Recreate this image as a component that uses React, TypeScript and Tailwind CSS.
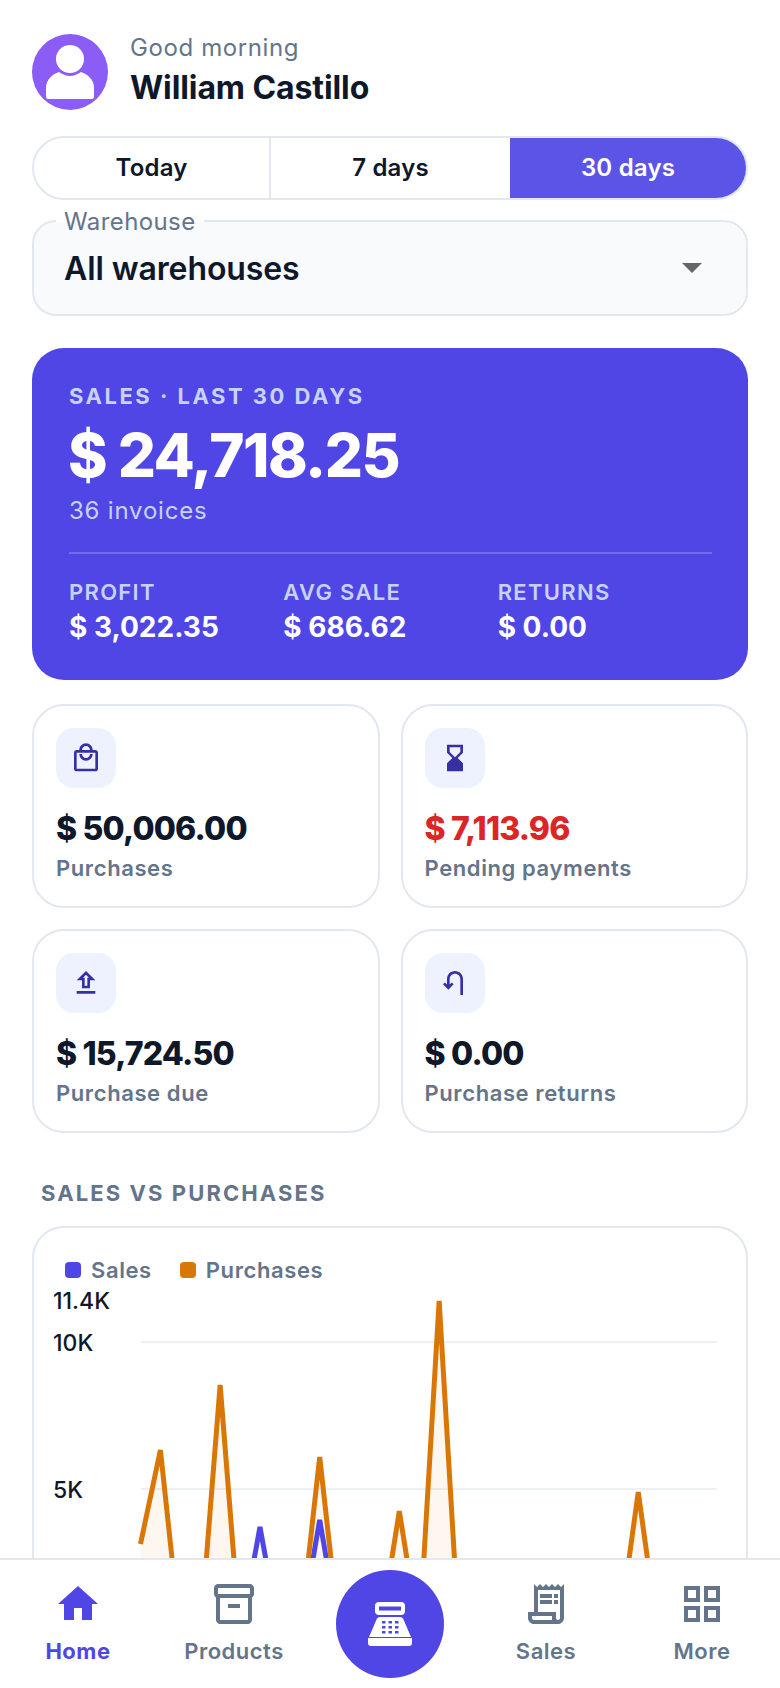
import React from 'react';
import {
  MdHome,
  MdHourglassBottom,
  MdOutlineGridView,
  MdOutlineInventory2,
  MdOutlineLocalMall,
  MdOutlineReceiptLong,
  MdOutlineUpload,
  MdOutlineUTurnLeft,
} from 'react-icons/md';

const purchases = [3130, 6330, 0, 0, 8540, 0, 0, 0, 0, 6090, 0, 0, 0, 4250, 0, 11400, 0, 0, 0, 0, 0, 0, 0, 0, 0, 4900, 0, 0, 0];
const sales = [0, 0, 0, 0, 0, 0, 3710, 0, 0, 3950, 0, 0, 0, 0, 0, 0, 0, 0, 0, 0, 0, 0, 0, 0, 0, 0, 0, 0, 0];

const px = (i: number) => 139.5 + i * 19.91;
const py = (v: number) => 1637 - v * 0.02939;
const linePath = (data: number[]) => data.map((v, i) => `${i === 0 ? 'M' : 'L'}${px(i)} ${py(v)}`).join(' ');

const Avatar = () => (
  <svg width="76" height="76" viewBox="0 0 76 76" className="shrink-0">
    <circle cx="38" cy="38" r="38" fill="#8b5cf6" />
    <circle cx="38" cy="25" r="14" fill="#fff" />
    <path d="M14 63V54c0-9 7-14 13-16 3 2 7 4 11 4s8-2 11-4c6 2 13 7 13 16v9c0 1-1 2-2 2H16c-1 0-2-1-2-2z" fill="#fff" />
  </svg>
);

const RegisterIcon = () => (
  <svg width="44" height="44" viewBox="0 0 44 44">
    <rect x="7" y="0" width="30" height="13" rx="4" fill="#fff" />
    <rect x="11" y="4.500" width="22" height="4" fill="#4f46e5" />
    <path d="M12 15h20c2 0 3 1 3.500 2.500L43 35H1l7.500-17.500C9 16 10 15 12 15z" fill="#fff" />
    <path d="M0 36h44v5c0 2-1 3-3 3H3c-2 0-3-1-3-3z" fill="#fff" />
    {[14, 20.500, 27].map((x) =>
      [19, 24, 29].map((y) => <rect key={`${x}-${y}`} x={x} y={y} width="3.500" height="2.500" fill="#4f46e5" />),
    )}
  </svg>
);

const StatCard = ({ icon, value, label, red }: { icon: React.ReactNode; value: string; label: string; red?: boolean }) => (
  <div className="h-[204px] rounded-[32px] border-2 border-[#e2e8f0] bg-white pl-[22px] pt-[22px]">
    <div className="flex h-[60px] w-[60px] items-center justify-center rounded-[18px] bg-[#eef2ff] text-[#3730a3]">{icon}</div>
    <div className={`mt-[21px] text-[32px] font-extrabold leading-[40px] tracking-[-0.8px] ${red ? 'text-[#dc2626]' : 'text-[#0f172a]'}`}>{value}</div>
    <div className="mt-[5px] text-[22px] font-semibold leading-[28px] tracking-[0.6px] text-[#64748b]">{label}</div>
  </div>
);

const HeroStat = ({ label, value }: { label: string; value: string }) => (
  <div className="w-[215px]">
    <div className="text-[22px] font-semibold leading-[28px] tracking-[1.300px] text-[#c7d2fe]">{label}</div>
    <div className="mt-[3px] text-[28px] font-bold leading-[36px] text-white">{value}</div>
  </div>
);

const NavItem = ({ icon, label, active }: { icon: React.ReactNode; label: string; active?: boolean }) => (
  <div className={`flex flex-col items-center pt-[20px] ${active ? 'text-[#4f46e5]' : 'text-[#64748b]'}`}>
    {icon}
    <span className={`mt-[9px] text-[22px] leading-[28px] tracking-[0.5px] ${active ? 'font-bold' : 'font-semibold'}`}>{label}</span>
  </div>
);

export default function App() {
  return (
    <div className="relative h-[1688px] w-[780px] overflow-hidden bg-white font-['Inter',sans-serif]">
      <div className="px-[32px] pt-[34px]">
        {/* Greeting */}
        <div className="flex items-start gap-[22px]">
          <Avatar />
          <div className="mt-[-2px]">
            <div className="text-[24px] leading-[32px] tracking-[0.6px] text-[#64748b]">Good morning</div>
            <div className="mt-[5px] text-[32px] font-bold leading-[38px] tracking-[-0.1px] text-[#0f172a]">William Castillo</div>
          </div>
        </div>

        {/* Range tabs */}
        <div className="mt-[26px] grid h-[64px] grid-cols-[237px_239px_1fr] overflow-hidden rounded-full border-2 border-[#e2e8f0]">
          <div className="flex items-center justify-center border-r-2 border-[#e2e8f0] text-[24px] font-semibold tracking-[0.2px] text-[#0f172a]">Today</div>
          <div className="flex items-center justify-center text-[24px] font-semibold tracking-[0.2px] text-[#0f172a]">7 days</div>
          <div className="flex items-center justify-center bg-[#5b54e6] text-[24px] font-semibold tracking-[0.2px] text-white">30 days</div>
        </div>

        {/* Warehouse select */}
        <div className="relative mt-[20px] flex h-[96px] items-center justify-between rounded-[24px] border-2 border-[#e2e8f0] bg-[#f8fafc] pl-[30px] pr-[44px]">
          <span className="absolute left-[22px] top-[-15px] bg-gradient-to-b from-white from-50% to-[#f8fafc] to-50% px-[8px] text-[24px] leading-[30px] tracking-[0.4px] text-[#64748b]">Warehouse</span>
          <span className="pt-[2px] text-[32px] font-semibold leading-[40px] tracking-[-0.1px] text-[#0f172a]">All warehouses</span>
          <span className="h-0 w-0 border-x-[10px] border-t-[10px] border-x-transparent border-t-[#666666]" />
        </div>

        {/* Sales hero */}
        <div className="mt-[32px] h-[332px] rounded-[32px] bg-[#4f46e5] px-[36px] pt-[34px]">
          <div className="pl-[1px] text-[22px] font-bold leading-[28px] tracking-[2.500px] text-[#c7d2fe]">SALES · LAST 30 DAYS</div>
          <div className="mt-[9px] text-[60px] font-extrabold leading-[72px] tracking-[-1.500px] text-white">$ 24,718.25</div>
          <div className="mt-[4px] pl-[1px] text-[24px] leading-[32px] tracking-[0.8px] text-[#c7d2fe]">36 invoices</div>
          <div className="mt-[25px] ml-[1px] h-[2px] bg-white/20" />
          <div className="mt-[24px] flex pl-[1px]">
            <HeroStat label="PROFIT" value="$ 3,022.35" />
            <HeroStat label="AVG SALE" value="$ 686.62" />
            <HeroStat label="RETURNS" value="$ 0.00" />
          </div>
        </div>

        {/* Stat cards */}
        <div className="mt-[24px] grid grid-cols-2 gap-x-[21px] gap-y-[21px]">
          <StatCard icon={<MdOutlineLocalMall size={32} />} value="$ 50,006.00" label="Purchases" />
          <StatCard icon={<MdHourglassBottom size={32} />} value="$ 7,113.96" label="Pending payments" red />
          <StatCard icon={<MdOutlineUpload size={32} />} value="$ 15,724.50" label="Purchase due" />
          <StatCard icon={<MdOutlineUTurnLeft size={32} />} value="$ 0.00" label="Purchase returns" />
        </div>

        {/* Chart */}
        <div className="mt-[46px] pl-[9px] text-[22px] font-bold leading-[28px] tracking-[2.100px] text-[#64748b]">SALES VS PURCHASES</div>
        <div className="mt-[19px] h-[600px] rounded-[32px] border-2 border-[#e2e8f0] bg-white">
          <div className="flex items-center pl-[31px] pt-[28px]">
            <span className="h-[16px] w-[16px] rounded-[4px] bg-[#4f46e5]" />
            <span className="ml-[10px] text-[22px] font-semibold leading-[28px] tracking-[0.6px] text-[#64748b]">Sales</span>
            <span className="ml-[28px] h-[16px] w-[16px] rounded-[4px] bg-[#d97706]" />
            <span className="ml-[10px] text-[22px] font-semibold leading-[28px] tracking-[0.6px] text-[#64748b]">Purchases</span>
          </div>
          <svg width="716" height="410" viewBox="33 1280 716 410" className="mt-[-5px] block">
            <line x1="140" y1="1343" x2="716" y2="1343" stroke="#edf0f4" strokeWidth="2" />
            <line x1="140" y1="1490" x2="716" y2="1490" stroke="#edf0f4" strokeWidth="2" />
            <g fill="#0f172a" fontSize="23" fontWeight="500" fontFamily="Inter, sans-serif">
              <text x="52" y="1310">11.4K</text>
              <text x="52" y="1352">10K</text>
              <text x="52" y="1499">5K</text>
            </g>
            <path d={`${linePath(purchases)} L${px(28)} 1637 L139.500 1637 Z`} fill="#d97706" fillOpacity="0.06" />
            <path d={linePath(sales)} fill="none" stroke="#4f46e5" strokeWidth="5" strokeLinejoin="miter" />
            <path d={linePath(purchases)} fill="none" stroke="#d97706" strokeWidth="5" strokeLinejoin="miter" />
          </svg>
        </div>
      </div>

      {/* Bottom nav */}
      <div className="absolute bottom-0 left-0 right-0 h-[130px] border-t-2 border-[#e2e8f0] bg-white">
        <div className="grid grid-cols-5">
          <NavItem icon={<MdHome size={48} />} label="Home" active />
          <NavItem icon={<MdOutlineInventory2 size={48} />} label="Products" />
          <div className="flex justify-center pt-[10px]">
            <div className="flex h-[108px] w-[108px] items-center justify-center rounded-full bg-[#4f46e5]">
              <RegisterIcon />
            </div>
          </div>
          <NavItem icon={<MdOutlineReceiptLong size={48} />} label="Sales" />
          <NavItem icon={<MdOutlineGridView size={48} />} label="More" />
        </div>
      </div>
    </div>
  );
}
